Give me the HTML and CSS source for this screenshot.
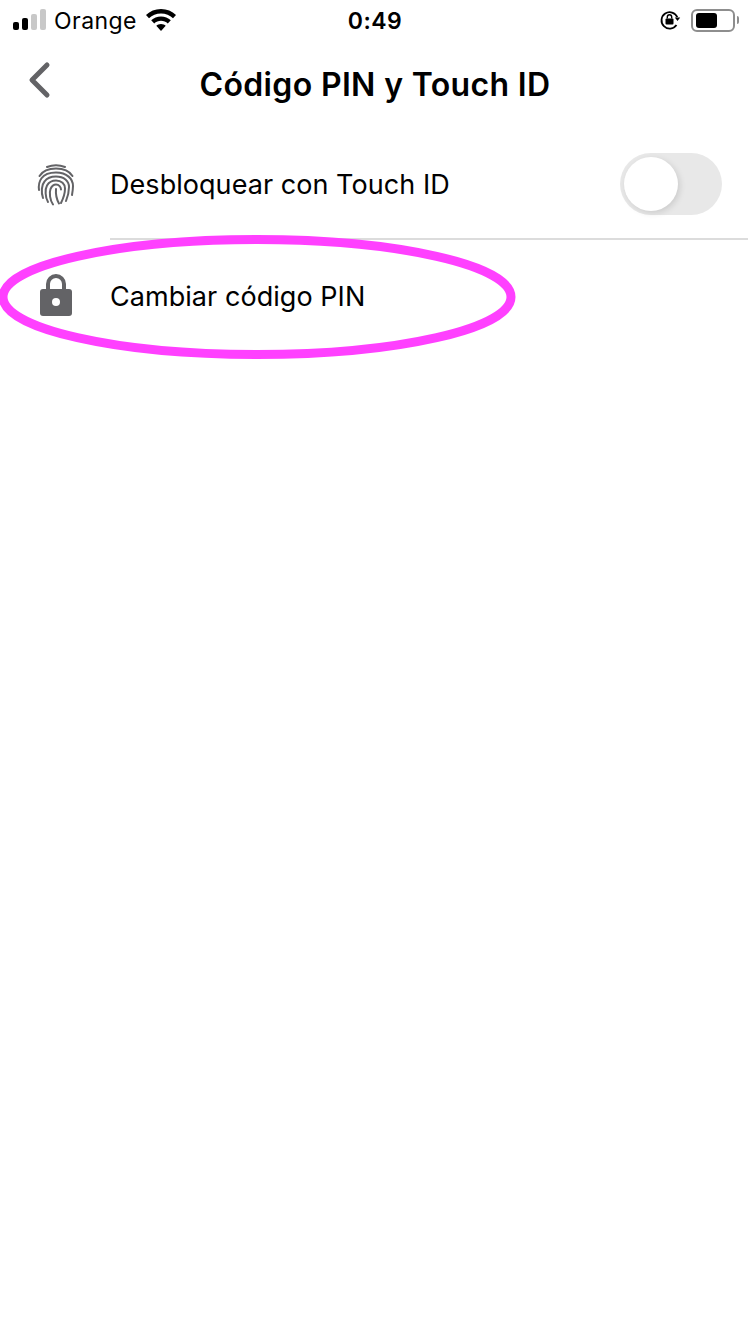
FILE: index.html
```html
<!DOCTYPE html>
<html lang="es">
<head>
    <meta charset="UTF-8">
    <meta name="viewport" content="width=device-width, initial-scale=1.0">
    <title>Código PIN y Touch ID</title>
    <link rel="stylesheet" href="styles.css">
</head>
<body>
    <div class="screen">
        <div class="status-bar">
            <div class="status-left">
                <div class="signal">
                    <span class="bar bar-1"></span>
                    <span class="bar bar-2"></span>
                    <span class="bar bar-3"></span>
                    <span class="bar bar-4"></span>
                </div>
                <span class="carrier">Orange</span>
                <svg class="wifi" width="32" height="24" viewBox="0 0 32 24">
                    <path d="M16 1C10 1 5 3.200 1 7l3 3.200C7.200 7.200 11.300 5.400 16 5.400S24.800 7.200 28 10.200L31 7C27 3.200 22 1 16 1Z" fill="#000"/>
                    <path d="M16 8.500c-3.800 0-7.200 1.400-9.800 3.800l3 3.200c1.800-1.700 4.200-2.700 6.800-2.700s5 1 6.800 2.700l3-3.200C23.200 9.900 19.800 8.500 16 8.500Z" fill="#000"/>
                    <path d="M16 16c-1.900 0-3.500.7-4.700 1.800L16 23l4.700-5.200C19.500 16.700 17.900 16 16 16Z" fill="#000"/>
                </svg>
            </div>
            <div class="clock">0:49</div>
            <div class="status-right">
                <svg class="rotation-lock" width="22" height="22" viewBox="0 0 22 22">
                    <path d="M18.300 8.200A8.200 8.200 0 1 0 17.500 16" fill="none" stroke="#000" stroke-width="1.800"/>
                    <path d="M15.800 8.500h5.400l-2.700 3.400Z" fill="#000"/>
                    <rect x="6.500" y="9.500" width="8" height="6" rx="1" fill="#000"/>
                    <path d="M8.300 9.500V8a2.200 2.200 0 0 1 4.400 0v1.500" fill="none" stroke="#000" stroke-width="1.400"/>
                </svg>
                <div class="battery">
                    <div class="battery-level"></div>
                </div>
                <div class="battery-cap"></div>
            </div>
        </div>

        <div class="nav-bar">
            <svg class="back" width="26" height="38" viewBox="0 0 26 38">
                <path d="M20 4 5 19l15 15" fill="none" stroke="#636366" stroke-width="5" stroke-linecap="round" stroke-linejoin="round"/>
            </svg>
            <h1 class="title">Código PIN y Touch ID</h1>
        </div>

        <div class="row row-touch">
            <div class="row-icon">
                <svg width="38" height="42" viewBox="0 0 38 42" fill="none" stroke="#636366" stroke-width="2" stroke-linecap="round">
                    <path d="M10 3Q19-.5 28 3"/>
                    <path d="M2.500 12C6 6.500 12 4.500 19 4.500S32 6.500 35.500 12"/>
                    <path d="M2 26C1 18 4 8.500 19 8.500 30 8.500 36 15 36 22 36 25 35.500 28 35 31"/>
                    <path d="M6 34C4 28 4.500 21 7.500 17.500 10 14 14 12.500 19 12.500 27 12.500 32 17 32 23 32 28 31 32 29 37"/>
                    <path d="M11 38C8 33 8 25 10 21.500 12 18 15 16.500 19 16.500 24.500 16.500 28 20 28 24.500 28 30 26 35 24 39"/>
                    <path d="M16 40.500C13 36 12 29 13.500 25 15 21.500 17 20.500 19 20.500 22 20.500 24 23 24 25.500"/>
                    <path d="M19 25C18.500 31 20 36 22 39.500"/>
                </svg>
            </div>
            <div class="row-body row-body-border">
                <span class="row-label row-label-touch">Desbloquear con Touch ID</span>
                <div class="toggle">
                    <div class="toggle-knob"></div>
                </div>
            </div>
        </div>

        <div class="row row-pin">
            <div class="row-icon">
                <svg class="lock" width="34" height="42" viewBox="0 0 34 42">
                    <path d="M9 18V10a8 8 0 0 1 16 0v8" fill="none" stroke="#636366" stroke-width="4"/>
                    <rect x="1" y="15" width="32" height="27" rx="3" fill="#636366"/>
                    <circle cx="17" cy="28" r="4" fill="#fff"/>
                </svg>
            </div>
            <div class="row-body">
                <span class="row-label">Cambiar código PIN</span>
            </div>
        </div>

        <svg class="highlight" width="520" height="128" viewBox="0 0 520 128">
            <ellipse cx="257" cy="64" rx="254" ry="57.500" fill="none" stroke="#ff40ff" stroke-width="9"/>
        </svg>
    </div>
</body>
</html>
```

FILE: styles.css
```css
html, body {
    margin: 0;
    padding: 0;
    background: #fff;
}
.screen {
    position: relative;
    width: 750px;
    height: 1334px;
    overflow: hidden;
    font-family: Inter, "Noto Sans", sans-serif;
    color: #000;
}
.status-bar {
    height: 40px;
    display: grid;
    grid-template-columns: 1fr auto 1fr;
    align-items: center;
    padding: 0 11px;
    box-sizing: border-box;
}
.status-left {
    display: flex;
    align-items: center;
}
.signal {
    display: flex;
    align-items: flex-end;
    gap: 3px;
    height: 21px;
    margin-left: 2px;
    margin-top: -1px;
}
.bar {
    width: 6px;
    border-radius: 2px;
    background: #000;
}
.bar-1 { height: 8px; }
.bar-2 { height: 12px; }
.bar-3 { height: 16px; background: #c8c8c8; }
.bar-4 { height: 21px; background: #c8c8c8; }
.carrier {
    margin-left: 8px;
    margin-top: 2px;
    font-size: 23px;
    letter-spacing: 0.45px;
}
.wifi {
    margin-left: 8px;
}
.clock {
    margin-top: 2px;
    font-size: 23px;
    font-weight: 600;
    letter-spacing: 0.5px;
}
.status-right {
    display: flex;
    align-items: center;
    justify-content: flex-end;
}
.rotation-lock {
    margin-right: 10px;
}
.battery {
    width: 44px;
    height: 23px;
    padding: 2px 3px;
    box-sizing: border-box;
    border: 2px solid #8e8e8e;
    border-radius: 6px;
}
.battery-level {
    width: 21px;
    height: 100%;
    background: #000;
    border-radius: 3px;
}
.battery-cap {
    width: 2px;
    height: 8px;
    margin-left: 2px;
    background: #8e8e8e;
    border-radius: 0 2px 2px 0;
}
.nav-bar {
    height: 89px;
    display: flex;
    align-items: center;
    justify-content: center;
}
.back {
    position: absolute;
    left: 27px;
    top: 61px;
}
.title {
    margin: 0;
    font-size: 32px;
    font-weight: 600;
    letter-spacing: 0.35px;
}
.row {
    display: flex;
}
.row-icon {
    width: 110px;
    display: flex;
    align-items: center;
    justify-content: center;
    box-sizing: border-box;
    padding-left: 2px;
}
.row-body {
    flex: 1;
    display: flex;
    align-items: center;
    justify-content: space-between;
    padding-right: 26px;
}
.row-body-border {
    border-bottom: 2px solid #dcdcdc;
    margin-right: 2px;
}
.row-touch {
    height: 111px;
}
.row-pin {
    height: 112px;
}
.lock {
    margin-top: -2px;
}
.row-label {
    font-size: 27px;
    letter-spacing: 0.05px;
}
.row-label-touch {
    margin-top: 2px;
}
.toggle {
    width: 102px;
    height: 62px;
    border-radius: 31px;
    background: #e8e8e8;
    box-sizing: border-box;
    padding: 4px;
}
.toggle-knob {
    width: 54px;
    height: 54px;
    border-radius: 50%;
    background: #fff;
    box-shadow: 2px 2px 6px rgba(0, 0, 0, 0.12);
}
.highlight {
    position: absolute;
    left: 0;
    top: 233px;
}
```
